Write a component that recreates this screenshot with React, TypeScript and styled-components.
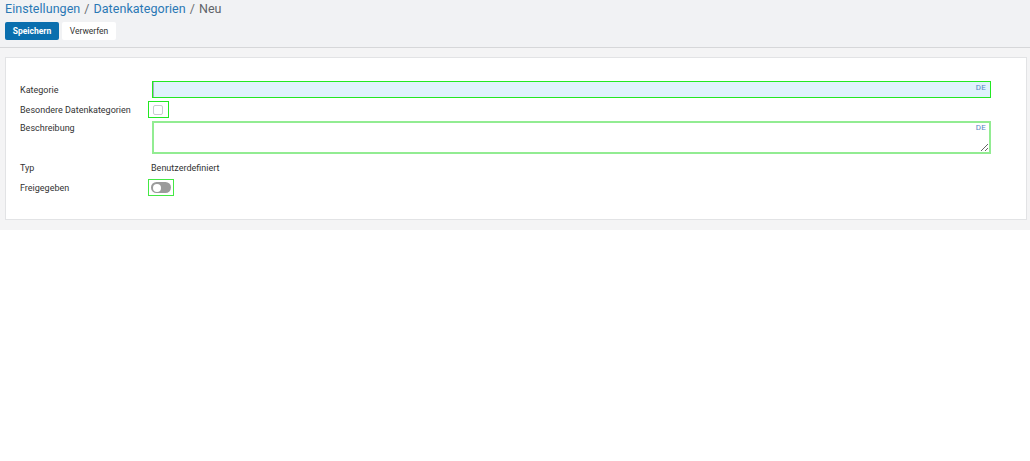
import styled, { createGlobalStyle } from 'styled-components';

const GlobalStyle = createGlobalStyle`
	html, body {
		margin: 0;
		padding: 0;
		background: #ffffff;
		font-family: Roboto, 'Liberation Sans', Arial, sans-serif;
	}
`;

const Header = styled.header`
	background: #f1f2f4;
	height: 47px;
	border-bottom: 1px solid #d6d7d9;
	box-shadow: 0 1px 1px rgba(0, 0, 0, 0.04);
	padding: 0 5px;
	box-sizing: content-box;
`;

const Breadcrumb = styled.div`
	font-size: 12.5px;
	line-height: 18px;
	color: #5f6368;
	letter-spacing: 0.05px;

	a {
		color: #2a78b4;
		text-decoration: none;
	}
	span.sep {
		margin: 0 4px;
		color: #6b6f73;
	}
`;

const Toolbar = styled.div`
	display: flex;
	gap: 3px;
	margin-top: 4px;
`;

const Button = styled.button<{ $primary?: boolean }>`
	height: 18px;
	padding: 0 6px;
	border: none;
	border-radius: 2px;
	font-family: inherit;
	font-size: 8.5px;
	font-weight: ${(p) => (p.$primary ? 700 : 400)};
	background: ${(p) => (p.$primary ? '#0a6fae' : '#ffffff')};
	color: ${(p) => (p.$primary ? '#ffffff' : '#333333')};
	min-width: 54px;
	cursor: pointer;
`;

const Content = styled.main`
	background: #f4f4f5;
	padding: 9px 3px 10px 5px;
`;

const Card = styled.section`
	background: #ffffff;
	border: 1px solid #e2e3e5;
	padding: 23px 35px 23px 14px;
	display: flex;
	flex-direction: column;
	gap: 3px;
`;

const Row = styled.div<{ $height: number }>`
	display: flex;
	align-items: center;
	min-height: ${(p) => p.$height}px;
`;

const TopRow = styled(Row)`
	align-items: flex-start;
`;

const Label = styled.label`
	width: 128px;
	flex-shrink: 0;
	font-size: 9px;
	line-height: 12px;
	color: #333333;
`;

const Field = styled.div`
	position: relative;
	flex: 1;
	display: flex;
`;

const TextInput = styled.input`
	box-sizing: border-box;
	width: 100%;
	height: 17px;
	margin-left: 4px;
	border: 1.5px solid #22e822;
	background: #dff2fc;
	outline: none;
	box-shadow: inset 1px 0 0 #9fb4c0;
	font-family: inherit;
	font-size: 9px;
`;

const TextArea = styled.textarea`
	box-sizing: border-box;
	width: 100%;
	height: 33px;
	margin-left: 4px;
	border: 2px solid #92ec92;
	background: #ffffff;
	outline: none;
	resize: vertical;
	font-family: inherit;
	font-size: 9px;
`;

const Lang = styled.span<{ $top: number }>`
	position: absolute;
	right: 5px;
	top: ${(p) => p.$top}px;
	font-size: 8px;
	color: #5a87c2;
	letter-spacing: 0.2px;
`;

const Highlight = styled.div<{ $w: number; $h: number; $color: string }>`
	box-sizing: border-box;
	width: ${(p) => p.$w}px;
	height: ${(p) => p.$h}px;
	border: 1.5px solid ${(p) => p.$color};
	display: flex;
	align-items: center;
	padding-left: 2px;
`;

const CheckBox = styled.span`
	display: block;
	width: 8px;
	height: 8px;
	margin-left: 2px;
	border: 1px solid #c9cbce;
	border-radius: 2px;
	background: #fff;
`;

const Toggle = styled.span`
	position: relative;
	display: block;
	width: 20px;
	height: 11px;
	border-radius: 6px;
	background: #9b9b9b;

	&::after {
		content: '';
		position: absolute;
		left: 1.5px;
		top: 1.5px;
		width: 8px;
		height: 8px;
		border-radius: 50%;
		background: #ffffff;
	}
`;

const Value = styled.span`
	font-size: 9px;
	color: #333333;
	margin-left: 3px;
`;

export default function App() {
	return (
		<>
			<GlobalStyle />
			<Header>
				<Breadcrumb>
					<a href='#'>Einstellungen</a>
					<span className='sep'>/</span>
					<a href='#'>Datenkategorien</a>
					<span className='sep'>/</span>
					Neu
				</Breadcrumb>
				<Toolbar>
					<Button $primary>Speichern</Button>
					<Button>Verwerfen</Button>
				</Toolbar>
			</Header>
			<Content>
				<Card>
					<Row $height={17}>
						<Label>Kategorie</Label>
						<Field>
							<TextInput />
							<Lang $top={2}>DE</Lang>
						</Field>
					</Row>
					<Row $height={17}>
						<Label>Besondere Datenkategorien</Label>
						<Highlight $w={21} $h={17} $color='#22e822'>
							<CheckBox />
						</Highlight>
					</Row>
					<TopRow $height={33}>
						<Label style={{ paddingTop: 1 }}>Beschreibung</Label>
						<Field>
							<TextArea />
							<Lang $top={2}>DE</Lang>
						</Field>
					</TopRow>
					<Row $height={16} style={{ marginTop: 3 }}>
						<Label>Typ</Label>
						<Value>Benutzerdefiniert</Value>
					</Row>
					<Row $height={17}>
						<Label>Freigegeben</Label>
						<Highlight $w={26} $h={17} $color='#44e844'>
							<Toggle />
						</Highlight>
					</Row>
				</Card>
			</Content>
		</>
	);
}
